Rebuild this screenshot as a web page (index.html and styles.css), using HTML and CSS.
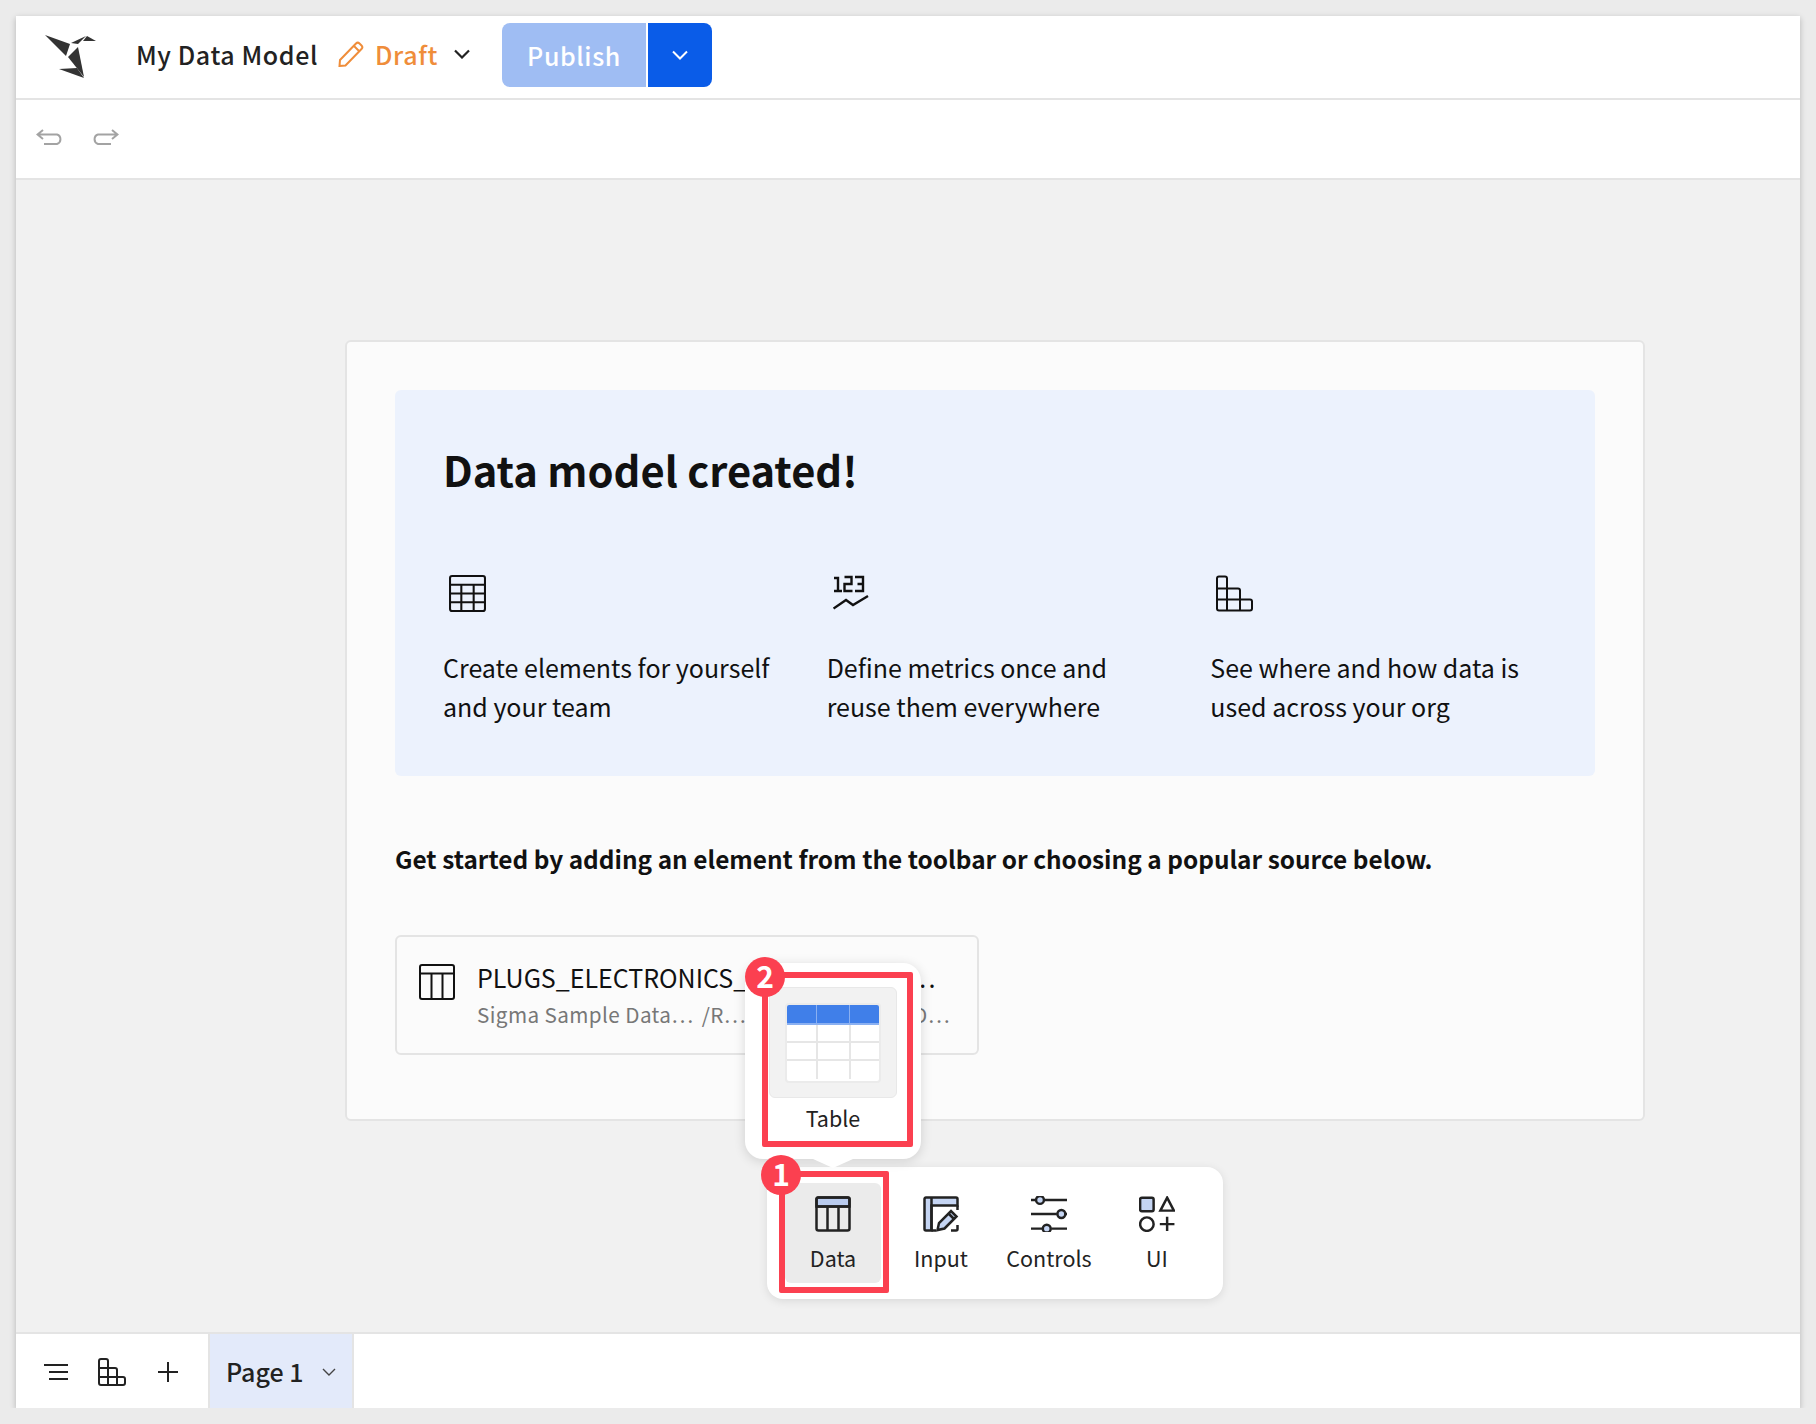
FILE: index.html
```html
<!DOCTYPE html>
<html lang="en">
<head>
    <meta charset="UTF-8">
    <title>My Data Model</title>
    <link rel="stylesheet" href="styles.css">
</head>
<body>
    <div class="app">
        <header class="topbar">
            <svg class="logo" viewBox="0 0 52 44">
                <path d="M0 0 25 9 21 21Z" fill="#333"/>
                <path d="M23 22 33 12 39 42Z" fill="#333"/>
                <path d="M14 34 32 33 39 43Z" fill="#333"/>
                <path d="M26 8 41 1 33 9Z" fill="#333"/>
                <path d="M38 6 42 1 51 6Z" fill="#333"/>
            </svg>
            <span class="doc-title">My Data Model</span>
            <svg class="pencil" viewBox="0 0 26 26" fill="none" stroke="#ef8d3a" stroke-width="2">
                <path d="M2 19 18 2.500a2.500 2.500 0 0 1 3.500 0l2 2a2.500 2.500 0 0 1 0 3.500L7.500 24.500 1.500 25Z"/>
                <path d="M16 5l5.500 5.500"/>
            </svg>
            <span class="draft">Draft</span>
            <svg class="draft-chevron" viewBox="0 0 16 10" fill="none" stroke="#222" stroke-width="2.200">
                <path d="M1 1.500 8 8.500 15 1.500"/>
            </svg>
            <button class="publish">Publish</button>
            <button class="publish-more">
                <svg viewBox="0 0 16 10" fill="none" stroke="#fff" stroke-width="2">
                    <path d="M1 1.500 8 8.500 15 1.500"/>
                </svg>
            </button>
        </header>

        <div class="history">
            <svg viewBox="0 0 27 16" fill="none" stroke="#a3a3a3" stroke-width="2">
                <path d="M7 1 1.500 5.500 7 10M1.500 5.500H21a5 5 0 0 1 0 9.500H8"/>
            </svg>
            <svg viewBox="0 0 27 16" fill="none" stroke="#a3a3a3" stroke-width="2">
                <path d="M20 1 25.500 5.500 20 10M25.500 5.500H6a5 5 0 0 0 0 9.500H19"/>
            </svg>
        </div>

        <main class="canvas">
            <section class="card">
                <div class="hero">
                    <h1>Data model created!</h1>
                    <div class="features">
                        <div class="feature">
                            <svg viewBox="0 0 36 36" fill="none" stroke="#111" stroke-width="2">
                                <rect x="1" y="1" width="34" height="34" rx="2"/>
                                <path d="M1 9.500H35M1 18H35M1 26.500H35M12 9.500V35M24 9.500V35"/>
                            </svg>
                            <p>Create elements for yourself and your team</p>
                        </div>
                        <div class="feature">
                            <svg viewBox="0 0 37 37" fill="none" stroke="#111" stroke-width="2.400">
                                <path d="M1 3H5V16M1 16H9M11.500 2H18.500V9H11.500V16H19.500M22 2H30V16H22M24.500 9H30"/>
                                <path d="M0.500 33.500 13 25 20 30 35 21"/>
                            </svg>
                            <p>Define metrics once and reuse them everywhere</p>
                        </div>
                        <div class="feature">
                            <svg viewBox="0 0 37 36" fill="none" stroke="#111" stroke-width="2">
                                <path d="M1 3a2 2 0 0 1 2-2H9a2 2 0 0 1 2 2V13H22a2 2 0 0 1 2 2V24H34a2 2 0 0 1 2 2V33a2 2 0 0 1-2 2H3a2 2 0 0 1-2-2Z"/>
                                <path d="M1 13H11V35M1 24H24M11 13V24M24 24V35"/>
                            </svg>
                            <p>See where and how data is used across your org</p>
                        </div>
                    </div>
                </div>
                <p class="get-started">Get started by adding an element from the toolbar or choosing a popular source below.</p>
                <div class="source">
                    <svg viewBox="0 0 36 36" fill="none" stroke="#111" stroke-width="2">
                        <rect x="1" y="1" width="34" height="34" rx="2"/>
                        <path d="M1 9.500H35M12.500 9.500V35M23.500 9.500V35"/>
                    </svg>
                    <div class="source-text">
                        <div class="source-name">PLUGS_ELECTRONICS_HANDS_ON_L…</div>
                        <div class="source-path">
                            <span>Sigma Sample Data…</span>
                            <span>/R…</span>
                            <span class="source-last">/PLUGS_D…</span>
                        </div>
                    </div>
                </div>
            </section>
        </main>

        <footer class="pagebar">
            <div class="page-tools">
                <svg class="tool-lines" viewBox="0 0 24 16" fill="none" stroke="#222" stroke-width="2">
                    <path d="M0 1H24M5 8H24M5 15H24"/>
                </svg>
                <svg class="tool-grid" viewBox="0 0 28 28" fill="none" stroke="#222" stroke-width="2">
                    <path d="M1 3a2 2 0 0 1 2-2H8a2 2 0 0 1 2 2V10H17a2 2 0 0 1 2 2V19H25a2 2 0 0 1 2 2V25a2 2 0 0 1-2 2H3a2 2 0 0 1-2-2Z"/>
                    <path d="M1 10H10V27M1 19H19M19 19V27"/>
                </svg>
                <svg class="tool-plus" viewBox="0 0 20 20" fill="none" stroke="#222" stroke-width="2">
                    <path d="M10 0V20M0 10H20"/>
                </svg>
            </div>
            <div class="page-tab">
                <span>Page 1</span>
                <svg viewBox="0 0 14 8" fill="none" stroke="#444" stroke-width="1.400">
                    <path d="M1 1 7 7 13 1"/>
                </svg>
            </div>
        </footer>

        <!-- floating element bar -->
        <div class="element-bar">
            <div class="element active">
                <svg viewBox="0 0 36 36" stroke="#222" stroke-width="2.500" fill="none">
                    <path d="M1.500 10.500V3a1.500 1.500 0 0 1 1.500-1.500H33a1.500 1.500 0 0 1 1.500 1.500V10.500Z" fill="#b9cbee"/>
                    <rect x="1.500" y="1.500" width="33" height="33" rx="2"/>
                    <path d="M1.500 10.500H34.500M12.500 10.500V34.500M23.500 10.500V34.500"/>
                </svg>
                <span>Data</span>
            </div>
            <div class="element">
                <svg viewBox="0 0 36 36" stroke="#222" stroke-width="2.500" fill="none">
                    <path d="M1.500 3a1.500 1.500 0 0 1 1.500-1.500H33a1.500 1.500 0 0 1 1.500 1.500V9.500H8.500V34.500H3a1.500 1.500 0 0 1-1.500-1.500Z" fill="#c5d5f3"/>
                    <path d="M8.500 1.500V34.500M8.500 34.500H13M34.500 9.500V14M34.500 29V33a1.500 1.500 0 0 1-1.500 1.500H28"/>
                    <path d="M14.500 34 16 27 28 15 33.500 20.500 21.500 32.500Z" fill="#c5d5f3"/>
                    <path d="M25.500 17.500 31 23"/>
                </svg>
                <span>Input</span>
            </div>
            <div class="element">
                <svg viewBox="0 0 32 32" stroke="#222" stroke-width="2.200" fill="none">
                    <path d="M0 3.500H4M12 3.500H32M0 16H23M31 16H32M0 29H10M18 29H32"/>
                    <circle cx="8" cy="3.500" r="3.500" fill="#c5d5f3"/>
                    <circle cx="27" cy="16" r="3.500" fill="#c5d5f3"/>
                    <circle cx="14" cy="29" r="3.500" fill="#c5d5f3"/>
                </svg>
                <span>Controls</span>
            </div>
            <div class="element">
                <svg viewBox="0 0 32 32" stroke="#222" stroke-width="2.200" fill="none">
                    <rect x="1" y="1.500" width="12" height="12" rx="1.500" fill="#c5d5f3"/>
                    <path d="M25 1.500 31 13H19Z"/>
                    <circle cx="7" cy="25" r="6"/>
                    <path d="M25 18.500V31M18.500 25H31.500"/>
                </svg>
                <span>UI</span>
            </div>
        </div>

        <!-- popover above Data -->
        <div class="popover">
            <div class="thumb">
                <div class="thumb-table">
                    <div class="thumb-head"><i></i><i></i><i></i></div>
                    <div class="thumb-row"><i></i><i></i><i></i></div>
                    <div class="thumb-row"><i></i><i></i><i></i></div>
                    <div class="thumb-row"><i></i><i></i><i></i></div>
                </div>
            </div>
            <span class="thumb-label">Table</span>
        </div>

        <!-- callouts -->
        <div class="frame frame-table"></div>
        <div class="frame frame-data"></div>
        <div class="badge badge-two">2</div>
        <div class="badge badge-one">1</div>
    </div>
</body>
</html>
```

FILE: styles.css
```css
* {
    box-sizing: border-box;
}

body {
    margin: 0;
    background-color: #ebebeb;
    font-family: "Noto Sans CJK JP", "Noto Sans", sans-serif;
    color: #111;
}

svg {
    display: block;
}

.app {
    position: relative;
    display: flex;
    flex-direction: column;
    width: 1784px;
    height: 1392px;
    margin: 16px 0 0 16px;
    background: #f1f1f1;
    box-shadow: 0 2px 6px rgba(0, 0, 0, 0.24);
}

/* top bar */
.topbar {
    display: flex;
    align-items: center;
    flex: none;
    height: 84px;
    padding: 0 0 6px 29px;
    background: white;
    border-bottom: 2px solid #e4e4e4;
}

.logo {
    width: 52px;
    height: 44px;
    margin-top: 5px;
}

.doc-title {
    width: 182px;
    margin-left: 39px;
    font-size: 25px;
    font-weight: 500;
    letter-spacing: 0.6px;
    white-space: nowrap;
    color: #222;
}

.pencil {
    width: 26px;
    height: 26px;
    margin-left: 20px;
}

.draft {
    width: 62px;
    margin-left: 11px;
    font-size: 25px;
    font-weight: 500;
    letter-spacing: 0.6px;
    color: #ef8d3a;
}

.draft-chevron {
    width: 16px;
    height: 10px;
    margin-left: 17px;
}

.publish {
    width: 144px;
    height: 64px;
    margin: 2px 0 0 32px;
    border: none;
    border-radius: 8px 0 0 8px;
    background: #9fbdf3;
    color: white;
    font-family: inherit;
    font-size: 25px;
    font-weight: 500;
    letter-spacing: 0.6px;
}

.publish-more {
    display: flex;
    align-items: center;
    justify-content: center;
    width: 64px;
    height: 64px;
    margin: 2px 0 0 2px;
    padding: 0;
    border: none;
    border-radius: 0 8px 8px 0;
    background: #0a5ce8;
}

.publish-more svg {
    width: 16px;
    height: 10px;
}

/* undo / redo */
.history {
    display: flex;
    align-items: center;
    flex: none;
    gap: 29px;
    height: 80px;
    padding: 0 0 4px 20px;
    background: white;
    border-bottom: 2px solid #e4e4e4;
}

.history svg {
    width: 27px;
    height: 16px;
}

/* canvas */
.canvas {
    flex: 1;
    padding: 160px 0 0 329px;
}

.card {
    width: 1300px;
    height: 781px;
    padding: 48px;
    background: #fbfbfb;
    border: 2px solid #e4e4e4;
    border-radius: 6px;
}

.hero {
    height: 386px;
    padding: 48px 49px 0 48px;
    background: #ecf2fd;
    border-radius: 6px;
}

h1 {
    margin: 0;
    font-size: 41.700px;
    font-weight: 600;
    line-height: 62px;
}

.features {
    display: grid;
    grid-template-columns: repeat(3, 1fr);
    gap: 48px;
    margin-top: 75px;
}

.feature svg {
    width: 37px;
    height: 37px;
    margin-left: 6px;
}

.feature p {
    margin: 36px 0 0;
    font-size: 25px;
    line-height: 39px;
}

.get-started {
    margin: 63px 0 0;
    font-size: 24.400px;
    font-weight: 600;
    line-height: 40px;
}

.source {
    display: flex;
    width: 584px;
    height: 120px;
    margin-top: 56px;
    padding: 22px;
    background: #fbfbfb;
    border: 2px solid #e4e4e4;
    border-radius: 6px;
}

.source svg {
    flex: none;
    width: 36px;
    height: 36px;
    margin-top: 5px;
}

.source-text {
    width: 473px;
    margin-left: 22px;
}

.source-name {
    font-size: 25px;
    line-height: 36px;
    white-space: nowrap;
}

.source-path {
    display: flex;
    gap: 8px;
    margin-top: 1px;
    font-size: 20.700px;
    line-height: 36px;
    letter-spacing: 0.4px;
    white-space: nowrap;
    color: #777;
}

.source-last {
    margin-left: auto;
}

/* page bar */
.pagebar {
    display: flex;
    flex: none;
    height: 76px;
    background: white;
    border-top: 2px solid #e4e4e4;
}

.page-tools {
    display: flex;
    align-items: center;
    width: 192px;
    padding: 2px 0 0 28px;
}

.tool-lines {
    width: 24px;
    height: 16px;
}

.tool-grid {
    width: 28px;
    height: 28px;
    margin-left: 30px;
}

.tool-plus {
    width: 20px;
    height: 20px;
    margin-left: 32px;
}

.page-tab {
    display: flex;
    align-items: center;
    width: 146px;
    padding: 0 0 0 16px;
    background: #e3eafa;
    border-left: 2px solid #e4e4e4;
    border-right: 2px solid #e4e4e4;
    font-size: 25px;
    font-weight: 500;
    color: #222;
}

.page-tab svg {
    width: 14px;
    height: 8px;
    margin: 2px 0 0 18px;
}

/* element bar */
.element-bar {
    position: absolute;
    left: 751px;
    top: 1151px;
    display: flex;
    width: 456px;
    height: 132px;
    padding-left: 12px;
    background: white;
    border-radius: 16px;
    box-shadow: 0 2px 10px rgba(0, 0, 0, 0.1);
}

.element {
    display: flex;
    flex-direction: column;
    align-items: center;
    width: 108px;
    padding-top: 29px;
    font-size: 21.500px;
    color: #222;
}

.element svg {
    width: 36px;
    height: 36px;
}

.element span {
    margin-top: 9px;
    line-height: 34px;
}

.element.active {
    position: relative;
}

.element.active::before {
    content: "";
    position: absolute;
    left: 6px;
    right: 6px;
    top: 16px;
    bottom: 16px;
    background: #ebebeb;
    border-radius: 6px;
}

.element.active svg,
.element.active span {
    position: relative;
}

/* table popover */
.popover {
    position: absolute;
    left: 729px;
    top: 947px;
    width: 176px;
    height: 196px;
    padding: 24px 24px 0;
    background: white;
    border-radius: 18px;
    box-shadow: 0 2px 12px rgba(0, 0, 0, 0.14);
    text-align: center;
}

.popover::after {
    content: "";
    position: absolute;
    left: 68px;
    bottom: -9px;
    border-left: 20px solid transparent;
    border-right: 20px solid transparent;
    border-top: 9px solid white;
}

.thumb {
    display: flex;
    justify-content: center;
    width: 128px;
    height: 111px;
    padding-top: 15px;
    background: #f2f2f2;
    border: 1px solid #e8e8e8;
    border-radius: 6px;
}

.thumb-table {
    width: 96px;
    height: 80px;
    background: white;
    border: 2px solid #ebebeb;
    border-radius: 4px;
    overflow: hidden;
}

.thumb-head,
.thumb-row {
    display: grid;
    grid-template-columns: 29px 33px 1fr;
    height: 18px;
    border-bottom: 2px solid #e6e6e6;
}

.thumb-head {
    height: 20px;
    background: #407fe9;
    border-bottom-color: #8ab0f1;
}

.thumb-row:last-child {
    border-bottom: none;
}

.thumb-row i + i {
    border-left: 2px solid #e6e6e6;
}

.thumb-head i + i {
    border-left: 1px solid #8ab0f1;
}

.thumb-label {
    display: block;
    margin-top: 3px;
    font-size: 21.500px;
    line-height: 34px;
    color: #222;
}

/* red callouts */
.frame {
    position: absolute;
    border: 6px solid #fb4050;
    border-radius: 2px;
}

.frame-table {
    left: 746px;
    top: 956px;
    width: 151px;
    height: 175px;
}

.frame-data {
    left: 763px;
    top: 1155px;
    width: 110px;
    height: 122px;
}

.badge {
    position: absolute;
    width: 40px;
    height: 40px;
    border-radius: 50%;
    background: #fb4050;
    color: white;
    font-size: 30px;
    font-weight: 700;
    line-height: 37px;
    text-align: center;
}

.badge-two {
    left: 729px;
    top: 941px;
}

.badge-one {
    left: 745px;
    top: 1139px;
}
```
